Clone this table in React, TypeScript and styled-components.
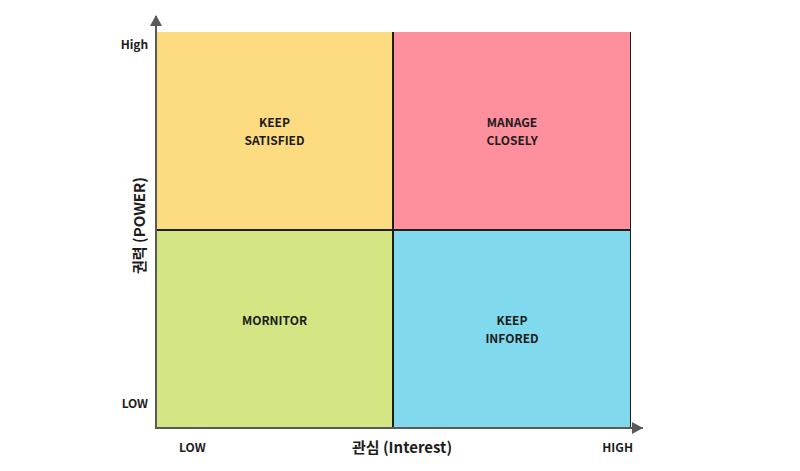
import React from 'react';
import styled, { createGlobalStyle } from 'styled-components';

const GlobalStyle = createGlobalStyle`
  html, body {
    margin: 0;
    padding: 0;
    background: #ffffff;
  }
  body {
    font-family: "Noto Sans CJK KR", "Noto Sans", sans-serif;
    color: #1c1c1c;
  }
`;

const AXIS = '#5a5a5a';

const Page = styled.div`
  width: 800px;
  height: 471px;
  box-sizing: border-box;
  padding-top: 16px;
  display: grid;
  grid-template-columns: 156px 487px;
  grid-template-rows: 413px 42px;
`;

const SideColumn = styled.div`
  display: flex;
  flex-direction: column;
  align-items: flex-end;
  padding-right: 8px;
`;

const Tick = styled.div<{ $top: number }>`
  margin-top: ${({ $top }) => $top}px;
  font-size: 12px;
  font-weight: 700;
  line-height: 16px;
  letter-spacing: -0.1px;
`;

const YTitle = styled.div`
  margin-top: 125px;
  margin-right: 1px;
  writing-mode: vertical-rl;
  text-orientation: sideways;
  transform: rotate(180deg);
  font-size: 15px;
  font-weight: 700;
  line-height: 16px;
  white-space: nowrap;
`;

const Plot = styled.div`
  position: relative;
  box-sizing: border-box;
  margin-left: -1px;
  padding: 16px 12px 0 0;
  border-left: 2px solid ${AXIS};
  border-bottom: 2px solid ${AXIS};

  &::before {
    content: '';
    position: absolute;
    left: -7px;
    top: -1px;
    border-left: 6px solid transparent;
    border-right: 6px solid transparent;
    border-bottom: 11px solid ${AXIS};
  }

  &::after {
    content: '';
    position: absolute;
    right: 0;
    bottom: -7px;
    border-top: 6px solid transparent;
    border-bottom: 6px solid transparent;
    border-left: 11px solid ${AXIS};
  }
`;

const Quadrants = styled.div`
  display: grid;
  grid-template-columns: 235px 236px;
  grid-template-rows: 197px 196px;
  gap: 2px;
  background: #1e1e1e;
`;

const Quadrant = styled.div<{ $bg: string }>`
  background: ${({ $bg }) => $bg};
  display: flex;
  align-items: center;
  justify-content: center;
`;

const QuadLabel = styled.div`
  min-height: 36px;
  text-align: center;
  font-size: 12px;
  font-weight: 700;
  line-height: 18px;
  white-space: pre-line;
`;

const BottomRow = styled.div`
  grid-column: 2;
  display: grid;
  grid-template-columns: 1fr auto 1fr;
  align-items: center;
  padding: 2px 10px 0 23px;
  height: 30px;
`;

const BottomTick = styled.div<{ $align: 'left' | 'right' }>`
  text-align: ${({ $align }) => $align};
  font-size: 12px;
  font-weight: 700;
`;

const XTitle = styled.div`
  font-size: 15px;
  font-weight: 700;
  margin-right: 8px;
`;

const quadrants = [
  { label: 'KEEP\nSATISFIED', bg: '#fddb81' },
  { label: 'MANAGE\nCLOSELY', bg: '#fe8f9c' },
  { label: 'MORNITOR', bg: '#d3e683' },
  { label: 'KEEP\nINFORED', bg: '#80d9ec' },
];

const App: React.FC = () => {
  return (
    <>
      <GlobalStyle />
      <Page>
        <SideColumn>
          <Tick $top={20}>High</Tick>
          <YTitle>권력 (POWER)</YTitle>
          <Tick $top={121}>LOW</Tick>
        </SideColumn>
        <Plot>
          <Quadrants>
            {quadrants.map((q) => (
              <Quadrant key={q.label} $bg={q.bg}>
                <QuadLabel>{q.label}</QuadLabel>
              </Quadrant>
            ))}
          </Quadrants>
        </Plot>
        <BottomRow>
          <BottomTick $align="left">LOW</BottomTick>
          <XTitle>관심 (Interest)</XTitle>
          <BottomTick $align="right">HIGH</BottomTick>
        </BottomRow>
      </Page>
    </>
  );
};

export default App;
